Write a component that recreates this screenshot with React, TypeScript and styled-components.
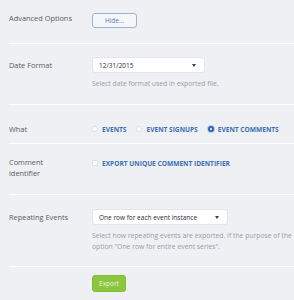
import React from 'react';
import styled, { createGlobalStyle } from 'styled-components';

const GlobalStyle = createGlobalStyle`
  html, body {
    margin: 0;
    padding: 0;
    background: #eef0f3;
    overflow: hidden;
  }
  body {
    font-family: "Open Sans", "Liberation Sans", sans-serif;
  }
`;

const App: React.FC = () => {
  return (
    <Page>
      <GlobalStyle />
      <Form>
        <Row $h={44} $top={12}>
          <Label>Advanced Options</Label>
          <Control>
            <HideButton>Hide...</HideButton>
          </Control>
        </Row>

        <Row $h={61} $top={13}>
          <Label $lh={17}>Date Format</Label>
          <Control>
            <Select $w={113}>
              <span>12/31/2015</span>
              <Caret />
            </Select>
            <Help>Select date format used in exported file.</Help>
          </Control>
        </Row>

        <Row $h={39} $top={18}>
          <Label>What</Label>
          <Control>
            <Options>
              <Option>
                <Radio />
                <OptionText>EVENTS</OptionText>
              </Option>
              <Option>
                <Radio />
                <OptionText>EVENT SIGNUPS</OptionText>
              </Option>
              <Option>
                <Radio $checked />
                <OptionText>EVENT COMMENTS</OptionText>
              </Option>
            </Options>
          </Control>
        </Row>

        <Row $h={51} $top={13}>
          <Label $lh={11}>
            Comment
            <br />
            identifier
          </Label>
          <Control>
            <Option>
              <Checkbox />
              <OptionText>EXPORT UNIQUE COMMENT IDENTIFIER</OptionText>
            </Option>
          </Control>
        </Row>

        <Row $h={72} $top={14}>
          <Label $lh={16}>Repeating Events</Label>
          <Control>
            <Select $w={136}>
              <span>One row for each event instance</span>
              <Caret />
            </Select>
            <Help $lh={11} $mt={5}>
              Select how repeating events are exported. If the purpose of the
              <br />
              option "One row for entire event series".
            </Help>
          </Control>
        </Row>

        <Row $h={33} $top={8} $last>
          <Label />
          <Control>
            <ExportButton>Export</ExportButton>
          </Control>
        </Row>
      </Form>
    </Page>
  );
};

export default App;

const Page = styled.div`
  width: 294px;
  height: 300px;
  overflow: hidden;
  padding-left: 9px;
  box-sizing: border-box;
`;

const Form = styled.div`
  width: 420px;
  display: flex;
  flex-direction: column;
`;

const Row = styled.div<{ $h: number; $top: number; $last?: boolean }>`
  display: flex;
  align-items: flex-start;
  height: ${(p) => p.$h}px;
  padding-top: ${(p) => p.$top}px;
  box-sizing: border-box;
  border-bottom: ${(p) => (p.$last ? 'none' : '1px solid #ffffff')};
`;

const Label = styled.div<{ $lh?: number }>`
  width: 83px;
  flex-shrink: 0;
  font-size: 7.4px;
  line-height: ${(p) => p.$lh ?? 12}px;
  color: #595c60;
`;

const Control = styled.div`
  display: flex;
  flex-direction: column;
  align-items: flex-start;
`;

const HideButton = styled.button`
  margin-top: 1px;
  width: 45px;
  height: 15px;
  padding: 0;
  font-family: inherit;
  font-size: 6.5px;
  color: #5a7fb5;
  background: #f4f6f9;
  border: 1px solid #9db3d4;
  border-radius: 3px;
`;

const Select = styled.div<{ $w: number }>`
  width: ${(p) => p.$w}px;
  height: 16px;
  box-sizing: border-box;
  display: flex;
  align-items: center;
  justify-content: space-between;
  padding: 0 8px 0 6px;
  background: #ffffff;
  border: 1px solid #e2e5e9;
  border-radius: 3px;
  font-size: 6.5px;
  color: #2b2d30;
`;

const Caret = styled.span`
  width: 0;
  height: 0;
  border-left: 2.5px solid transparent;
  border-right: 2.5px solid transparent;
  border-top: 3px solid #3a3d42;
`;

const Help = styled.div<{ $lh?: number; $mt?: number }>`
  margin-top: ${(p) => p.$mt ?? 6}px;
  font-size: 6.8px;
  line-height: ${(p) => p.$lh ?? 10}px;
  color: #9a9ea4;
  white-space: nowrap;
`;

const Options = styled.div`
  display: flex;
  gap: 10px;
`;

const Option = styled.div`
  display: flex;
  align-items: center;
  gap: 4px;
  height: 12px;
`;

const Radio = styled.span<{ $checked?: boolean }>`
  width: 6px;
  height: 6px;
  box-sizing: border-box;
  border-radius: 50%;
  background: #ffffff;
  border: ${(p) => (p.$checked ? '2px solid #2f66b3' : '1px solid #dde1e6')};
  box-shadow: ${(p) => (p.$checked ? '0 0 0 1px #b9cbe6' : 'none')};
`;

const Checkbox = styled.span`
  width: 6px;
  height: 6px;
  box-sizing: border-box;
  background: #ffffff;
  border: 1px solid #dde1e6;
  border-radius: 1px;
`;

const OptionText = styled.span`
  font-size: 6.6px;
  font-weight: 700;
  color: #3c6fb2;
`;

const ExportButton = styled.button`
  width: 34px;
  height: 17px;
  padding: 0;
  font-family: inherit;
  font-size: 6.5px;
  color: #eaf6d8;
  background: #8cc63e;
  border: 1px solid #84bd38;
  border-radius: 3px;
`;
